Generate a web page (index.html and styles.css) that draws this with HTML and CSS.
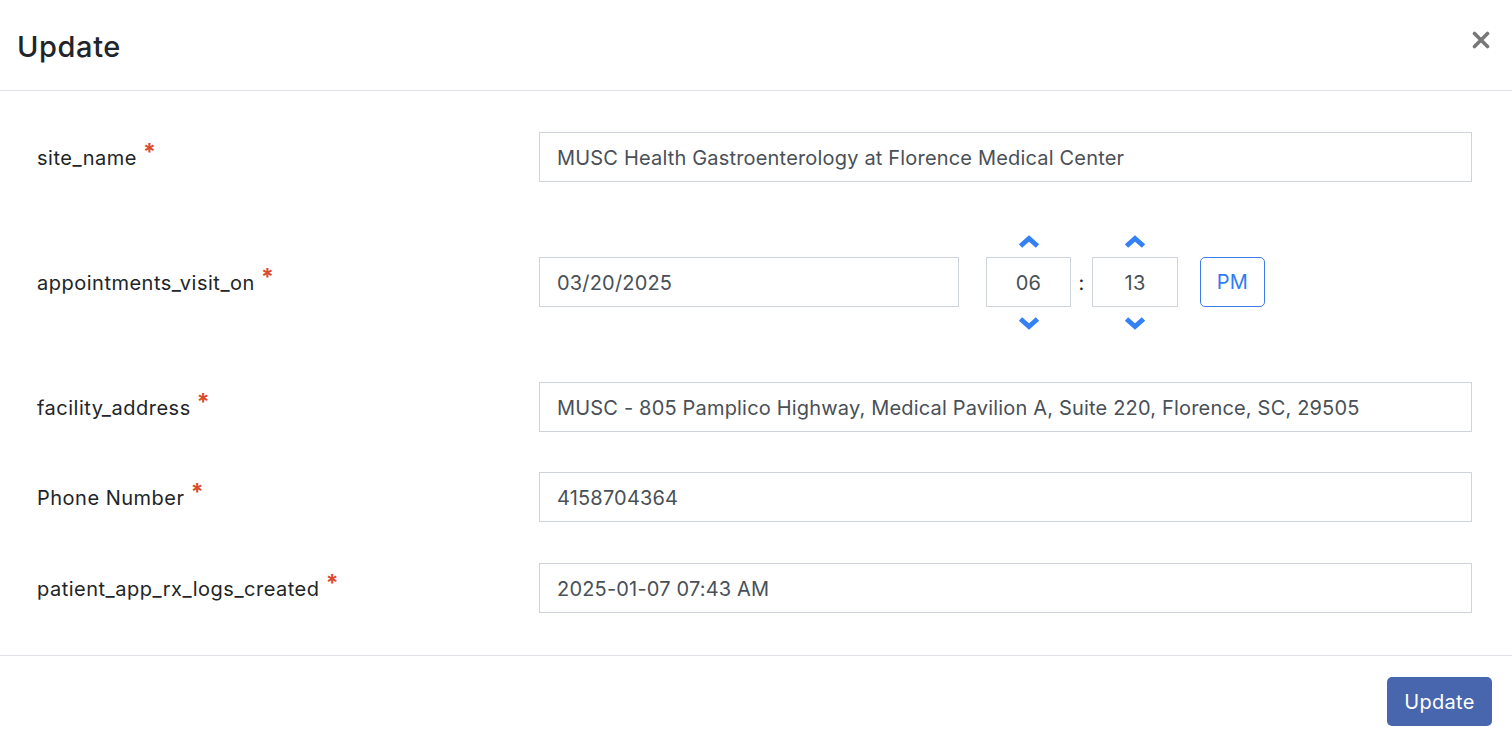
FILE: index.html
```html
<!DOCTYPE html>
<html>
<head>
<meta charset="utf-8">
<link rel="stylesheet" href="styles.css">
</head>
<body>
<div class="modal">
  <div class="modal-header">
    <h1 class="title">Update</h1>
    <button class="close" aria-label="Close">
      <svg width="18" height="18" viewBox="0 0 18 18"><path d="M2.5 2.5 L15.5 15.5 M15.5 2.5 L2.5 15.5" stroke="#777" stroke-width="3.6" stroke-linecap="round"/></svg>
    </button>
  </div>
  <div class="modal-body">
    <div class="row">
      <label class="label">site_name <span class="req">*</span></label>
      <div class="input">MUSC Health Gastroenterology at Florence Medical Center</div>
    </div>
    <div class="row">
      <label class="label">appointments_visit_on <span class="req">*</span></label>
      <div class="datetime">
        <div class="input date">03/20/2025</div>
        <div class="timepicker">
          <div class="tcol">
            <span class="chev up"><svg width="24" height="14" viewBox="0 0 24 14"><polyline points="3.5,11 12,3.5 20.5,11" fill="none" stroke="#3480f5" stroke-width="5" stroke-linejoin="miter"/></svg></span>
            <div class="tbox">06</div>
            <span class="chev down"><svg width="24" height="14" viewBox="0 0 24 14"><polyline points="3.5,3 12,10.5 20.5,3" fill="none" stroke="#3480f5" stroke-width="5" stroke-linejoin="miter"/></svg></span>
          </div>
          <div class="colon">:</div>
          <div class="tcol min">
            <span class="chev up"><svg width="24" height="14" viewBox="0 0 24 14"><polyline points="3.5,11 12,3.5 20.5,11" fill="none" stroke="#3480f5" stroke-width="5" stroke-linejoin="miter"/></svg></span>
            <div class="tbox">13</div>
            <span class="chev down"><svg width="24" height="14" viewBox="0 0 24 14"><polyline points="3.5,3 12,10.5 20.5,3" fill="none" stroke="#3480f5" stroke-width="5" stroke-linejoin="miter"/></svg></span>
          </div>
          <button class="ampm">PM</button>
        </div>
      </div>
    </div>
    <div class="row">
      <label class="label">facility_address <span class="req">*</span></label>
      <div class="input">MUSC - 805 Pamplico Highway, Medical Pavilion A, Suite 220, Florence, SC, 29505</div>
    </div>
    <div class="row">
      <label class="label">Phone Number <span class="req">*</span></label>
      <div class="input">4158704364</div>
    </div>
    <div class="row">
      <label class="label">patient_app_rx_logs_created <span class="req">*</span></label>
      <div class="input">2025-01-07 07:43 AM</div>
    </div>
  </div>
  <div class="modal-footer">
    <button class="btn-primary">Update</button>
  </div>
</div>
</body>
</html>
```

FILE: styles.css
```css
* { box-sizing: border-box; }
html, body { margin: 0; padding: 0; background: #fff; }
body {
  font-family: Inter, "Noto Sans", "Liberation Sans", sans-serif;
  color: #212529;
  width: 1512px;
  height: 746px;
  overflow: hidden;
}
.modal { width: 1512px; }
.modal-header {
  height: 91px;
  border-bottom: 1px solid #dee2e6;
  display: flex;
  align-items: center;
  justify-content: space-between;
  padding: 0 21px 0 17px;
}
.title {
  margin: 0;
  font-size: 29px;
  font-weight: 500;
  letter-spacing: 0.6px;
  color: #212529;
  padding-top: 2px;
}
.close {
  border: 0;
  background: none;
  padding: 0;
  width: 20px;
  height: 20px;
  display: flex;
  align-items: center;
  justify-content: center;
  margin-bottom: 10px;
}
.modal-body {
  padding: 41px 40px 42px 37px;
  display: flex;
  flex-direction: column;
  gap: 40px;
}
.row {
  display: grid;
  grid-template-columns: 502px 1fr;
  align-items: center;
}
.row + .row + .row + .row + .row { margin-top: 1px; }
.label {
  font-size: 20px;
  color: #212529;
  line-height: 24px;
  letter-spacing: 0.5px;
}
.req {
  color: #db4a2b;
  font-weight: 700;
  font-size: 23px;
  position: relative;
  top: -5px;
  margin-left: 0;
}
.input {
  height: 50px;
  border: 1px solid #ced4da;
  padding: 2px 17px 0;
  display: flex;
  align-items: center;
  font-size: 20px;
  letter-spacing: 0.18px;
  color: #495057;
  white-space: nowrap;
}
.datetime {
  display: flex;
  align-items: center;
}
.date { width: 420px; }
.timepicker {
  display: flex;
  align-items: center;
  margin-left: 27px;
}
.tcol {
  width: 85px;
  display: flex;
  flex-direction: column;
  align-items: center;
}
.tcol.min { width: 86px; }
.chev {
  height: 35px;
  display: flex;
  align-items: center;
  justify-content: center;
}
.chev.up { padding-top: 4px; }
.chev.down { padding-bottom: 4px; }
.tbox {
  width: 100%;
  height: 50px;
  border: 1px solid #ced4da;
  display: flex;
  align-items: center;
  justify-content: center;
  padding-top: 2px;
  font-size: 20px;
  color: #495057;
  letter-spacing: 0.2px;
}
.colon {
  width: 21px;
  text-align: center;
  font-size: 20px;
  color: #212529;
  padding-top: 2px;
}
.ampm {
  margin-left: 22px;
  width: 65px;
  height: 50px;
  border: 1px solid #3b7ee9;
  border-radius: 5px;
  background: #fff;
  color: #2f7cf6;
  font-family: inherit;
  font-size: 20px;
  letter-spacing: 0.3px;
  padding: 0;
}
.modal-footer {
  border-top: 1px solid #dee2e6;
  display: flex;
  justify-content: flex-end;
  padding: 21px 20px 20px;
}
.btn-primary {
  width: 105px;
  height: 49px;
  border: 0;
  border-radius: 5px;
  background: #4766ad;
  color: #fff;
  font-family: inherit;
  font-size: 20px;
  letter-spacing: 0.3px;
  padding: 0;
}
```
